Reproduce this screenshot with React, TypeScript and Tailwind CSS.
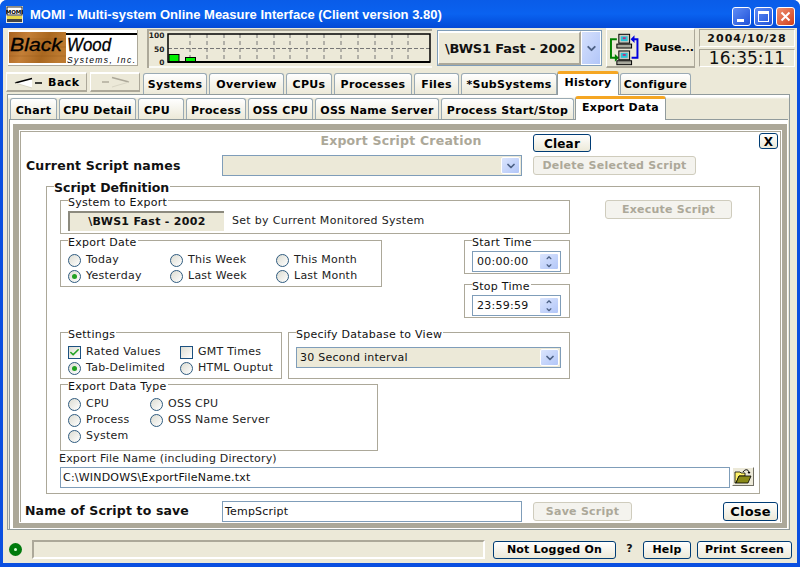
import { ReactNode } from 'react'
import { Check, ChevronDown, ChevronUp } from 'lucide-react'

const topTabs = [
  { label: 'Systems', cls: 'w-[64px]' },
  { label: 'Overview', cls: 'w-[75px]' },
  { label: 'CPUs', cls: 'w-[46px]' },
  { label: 'Processes', cls: 'w-[78px]' },
  { label: 'Files', cls: 'w-[45px]' },
  { label: '*SubSystems', cls: 'w-[96px]' },
  { label: 'History', cls: 'w-[62px] -ml-[2px]', active: true },
  { label: 'Configure', cls: 'w-[71px] -ml-[1px]' },
]

const subTabs = [
  { label: 'Chart', cls: 'w-[47px]' },
  { label: 'CPU Detail', cls: 'w-[77px]' },
  { label: 'CPU', cls: 'w-[46px] justify-start pl-[5px]' },
  { label: 'Process', cls: 'w-[60px]' },
  { label: 'OSS CPU', cls: 'w-[65px]' },
  { label: 'OSS Name Server', cls: 'w-[124px]' },
  { label: 'Process Start/Stop', cls: 'w-[133px]' },
  { label: 'Export Data', cls: 'w-[91px] -ml-[1px]', active: true },
]

function Tab({ label, cls, active, pad }: { label: string; cls: string; active?: boolean; pad: string }) {
  if (active) {
    return (
      <div className={`relative z-10 -mb-px flex h-[24px] items-center justify-center rounded-t-[3px] border-x border-[#919b9c] border-t-[3px] border-t-[#f5a623] bg-white pb-[2px] text-[11px] font-bold tracking-[0.3px] text-black ${cls}`}>
        {label}
      </div>
    )
  }
  return (
    <div className={`flex h-[21px] items-center justify-center rounded-t-[3px] border-x border-t border-[#9aaab4] bg-gradient-to-b from-white to-[#ece9d8] text-[11px] font-bold tracking-[0.3px] text-black ${pad} ${cls}`}>
      {label}
    </div>
  )
}

function Group({ title, cls, children }: { title: string; cls: string; children?: ReactNode }) {
  return (
    <div className={`relative border border-[#aca899] ${cls}`}>
      <span className="absolute -top-[4px] left-[7px] bg-white pr-px text-[11px] leading-[12px] tracking-[0.25px] text-[#111]">{title}</span>
      {children}
    </div>
  )
}

function Radio({ label, checked }: { label: string; checked?: boolean }) {
  return (
    <div className="flex h-[16px] items-center gap-[5px] text-[11px] tracking-[0.25px] text-[#222]">
      <span className="flex h-[13px] w-[13px] items-center justify-center rounded-full border border-[#2f5b7f] bg-gradient-to-br from-[#dcdcd2] to-white">
        {checked && <span className="h-[5px] w-[5px] rounded-full bg-[#21a121]" />}
      </span>
      {label}
    </div>
  )
}

function CheckItem({ label, checked }: { label: string; checked?: boolean }) {
  return (
    <div className="flex h-[16px] items-center gap-[5px] text-[11px] tracking-[0.25px] text-[#222]">
      <span className="flex h-[13px] w-[13px] items-center justify-center border border-[#1c5180] bg-gradient-to-br from-[#dcdcd2] to-white">
        {checked && <Check size={11} strokeWidth={3.5} className="text-[#21a121]" />}
      </span>
      {label}
    </div>
  )
}

function Btn({ label, cls }: { label: string; cls: string }) {
  return (
    <div className={`flex items-center justify-center rounded-[3px] border border-[#003c74] bg-gradient-to-b from-white to-[#ece9d8] pt-px text-[11px] font-bold tracking-[0.2px] text-black ${cls}`}>
      {label}
    </div>
  )
}

function OffBtn({ label, cls }: { label: string; cls: string }) {
  return (
    <div className={`flex items-center justify-center rounded-[3px] border border-[#cfccbd] bg-[#f4f3ee] pt-px text-[11px] font-bold tracking-[0.25px] text-[#aca899] ${cls}`}>
      {label}
    </div>
  )
}

function DropBtn() {
  return (
    <div className="flex h-[17px] w-[19px] items-center justify-center rounded-[2px] border border-white bg-gradient-to-br from-[#dbe5fd] to-[#b2c6f8]">
      <ChevronDown size={12} strokeWidth={3.5} className="text-[#4d6185]" />
    </div>
  )
}

function Logo() {
  return (
    <svg width="130" height="36" viewBox="0 0 130 36" className="block">
      <defs>
        <linearGradient id="wood" x1="0" y1="0" x2="1" y2="0.2">
          <stop offset="0" stopColor="#a8621f" />
          <stop offset="0.35" stopColor="#c47f37" />
          <stop offset="0.7" stopColor="#a9671f" />
          <stop offset="1" stopColor="#bd7a30" />
        </linearGradient>
      </defs>
      <rect width="130" height="36" fill="#aca899" />
      <rect x="0" y="0" width="129" height="35" fill="#fff" />
      <rect x="1" y="2" width="57" height="31" fill="url(#wood)" />
      <path d="M1 9h57M1 17h57M1 26h57" stroke="#8f5418" strokeWidth="0.6" opacity="0.5" />
      <rect x="58" y="3" width="71" height="2" fill="#000" />
      <text x="2" y="21" fontFamily="Liberation Sans" fontStyle="italic" fontSize="18" textLength="52" lengthAdjust="spacingAndGlyphs" stroke="#000" strokeWidth="0.3" fill="#000">Black</text>
      <text x="59" y="21" fontFamily="Liberation Sans" fontStyle="italic" fontSize="18" textLength="44" lengthAdjust="spacingAndGlyphs" stroke="#000" strokeWidth="0.3" fill="#000">Wood</text>
      <text x="59" y="33" fontFamily="Liberation Sans" fontStyle="italic" fontSize="8.5" textLength="68" fill="#000">Systems, Inc.</text>
    </svg>
  )
}

function Chart() {
  const xs = [190, 207, 224, 240, 257, 274, 290, 307, 324, 341, 358, 375, 392, 408]
  return (
    <svg width="285" height="39" viewBox="147 29 285 39" className="block">
      <rect x="147" y="29" width="285" height="39" fill="#ece9d8" />
      <path d="M148 68V30h284" fill="none" stroke="#aca899" strokeWidth="2" />
      <path d="M149 67h283" stroke="#fff" strokeWidth="1.5" />
      {xs.map((x) => (
        <line key={x} x1={x} y1="34" x2={x} y2="62" stroke="#777" strokeDasharray="4 3" />
      ))}
      <line x1="168" y1="48.5" x2="430" y2="48.5" stroke="#777" strokeDasharray="4 2" />
      <rect x="169" y="54.5" width="10" height="7" fill="#00f000" stroke="#000" />
      <rect x="185.5" y="57.5" width="10" height="4" fill="#00f000" stroke="#000" />
      <path d="M168 34h262v28H168z" fill="none" stroke="#000" strokeWidth="1.5" />
      <path d="M168 62h262" stroke="#000" strokeWidth="2" />
      <text x="164.5" y="38" textAnchor="end" fontSize="7.5" fontWeight="700" fontFamily="DejaVu Sans" fill="#222">100</text>
      <text x="164.5" y="51.5" textAnchor="end" fontSize="7.5" fontWeight="700" fontFamily="DejaVu Sans" fill="#222">50</text>
      <text x="164.5" y="65" textAnchor="end" fontSize="7.5" fontWeight="700" fontFamily="DejaVu Sans" fill="#222">0</text>
    </svg>
  )
}

function Computer({ y }: { y: number }) {
  return (
    <g transform={`translate(7 ${y})`}>
      <rect x="2" y="0" width="11" height="9" fill="#c9c9c0" stroke="#000" />
      <rect x="4" y="2" width="7" height="5" fill="#28c6d8" />
      <rect x="6" y="3" width="3" height="2" fill="#c03080" />
      <rect x="0" y="10" width="15" height="4" fill="#a8a89c" stroke="#000" />
    </g>
  )
}

function PauseIcon() {
  return (
    <svg width="30" height="34" viewBox="0 0 30 34">
      <path d="M7 7H1V26h5" fill="none" stroke="#008000" strokeWidth="2" />
      <path d="M5 22l4 4-4 4z" fill="#008000" />
      <path d="M22 26h6V7h-4" fill="none" stroke="#0000e0" strokeWidth="2" />
      <path d="M25 3l-4 4 4 4z" fill="#0000e0" />
      <Computer y={2} />
      <Computer y={19} />
    </svg>
  )
}

function FolderIcon() {
  return (
    <svg width="18" height="15" viewBox="0 0 18 15">
      <path d="M1 3h5l1 1h4v3H5L2 14H1z" fill="#fff26b" stroke="#000" strokeWidth="0.8" />
      <path d="M2 14l3-7h12l-3 7z" fill="#8a8a18" stroke="#000" strokeWidth="0.8" />
      <path d="M9 3c2-3 5-3 6 0" fill="none" stroke="#000" />
      <path d="M13.5 3h3l-1.5 2z" fill="#000" />
    </svg>
  )
}

function ArrowBack({ color, fill }: { color: string; fill: string }) {
  return (
    <svg width="30" height="12" viewBox="0 0 30 12">
      <path d="M1 6L18 11V1z" fill={fill} />
      <path d="M1 6L18 1.5" stroke={color} strokeWidth="1.6" fill="none" />
      <path d="M1 6L18 11" stroke="#d8d5c4" fill="none" />
      <path d="M21 6h7" stroke={color} strokeWidth="1.4" />
    </svg>
  )
}

export default function App() {
  return (
    <div className="flex h-[567px] w-[800px] flex-col overflow-hidden rounded-t-[7px] bg-[#0a4fe0] font-['DejaVu_Sans',sans-serif]">
      {/* title bar */}
      <div className="flex h-[28px] shrink-0 items-center bg-gradient-to-b from-[#0a5ce8] via-[#0a62f0] to-[#0449d6] pl-[6px] pr-[5px]">
        <svg width="17" height="17" viewBox="0 0 17 17">
          <rect width="17" height="17" fill="#ece9d8" />
          <rect x="1" y="1" width="15" height="8" fill="#fff" stroke="#000" strokeWidth="0.8" />
          <text x="8.5" y="7.5" textAnchor="middle" fontSize="5.5" fontWeight="700" fontFamily="DejaVu Sans" fill="#000">MOMI</text>
          <rect x="1" y="10" width="15" height="3" fill="#e8d84a" />
          <rect x="1" y="13" width="15" height="3" fill="#444" />
        </svg>
        <span className="ml-[7px] mt-px font-['Liberation_Sans',sans-serif] text-[13px] font-bold text-white">MOMI - Multi-system Online Measure Interface (Client version 3.80)</span>
        <div className="ml-auto mt-[4px] flex gap-[3px]">
          <div className="flex h-[19px] w-[19px] items-end rounded-[3px] border border-white bg-gradient-to-br from-[#5f8cf5] to-[#2050d8] pb-[3px] pl-[4px]">
            <span className="h-[3px] w-[7px] bg-white" />
          </div>
          <div className="flex h-[19px] w-[19px] items-center justify-center rounded-[3px] border border-white bg-gradient-to-br from-[#5f8cf5] to-[#2050d8]">
            <span className="h-[11px] w-[11px] border border-t-[3px] border-white" />
          </div>
          <div className="flex h-[19px] w-[19px] items-center justify-center rounded-[3px] border border-white bg-gradient-to-br from-[#ee9070] to-[#d03a14]">
            <svg width="11" height="11" viewBox="0 0 11 11">
              <path d="M1.5 1.5l8 8M9.5 1.5l-8 8" stroke="#fff" strokeWidth="2" />
            </svg>
          </div>
        </div>
      </div>

      <div className="mx-[3px] mb-[4px] flex flex-1 flex-col bg-[#ece9d8]">
        {/* toolbar */}
        <div className="flex h-[42px] shrink-0 items-start">
          <div className="ml-[5px] mt-[2px]">
            <Logo />
          </div>
          <div className="ml-[9px] mt-[1px]">
            <Chart />
          </div>
          <div className="ml-[5px] mt-[2px] flex h-[36px] w-[165px] items-stretch border border-[#7f9db9]">
            <div className="flex w-[143px] items-center border-y-2 border-l border-r-2 border-t-white border-l-white border-b-[#aca899] border-r-[#aca899] pl-[6px] pt-px text-[13px] font-bold tracking-[-0.15px] text-[#111]">
              \BWS1 Fast - 2002
            </div>
            <div className="flex w-[20px] items-center justify-center border border-white bg-gradient-to-br from-[#d5e0fc] to-[#b2c6f8]">
              <ChevronDown size={13} strokeWidth={3.5} className="text-[#4d6185]" />
            </div>
          </div>
          <div className="ml-[4px] flex h-[40px] w-[89px] items-center gap-[5px] border-y-2 border-x border-t-white border-l-white border-b-[#aca899] border-r-[#aca899] pl-[3px] pt-px text-[11px] font-bold text-black">
            <PauseIcon />
            Pause...
          </div>
          <div className="ml-[4px] mt-[1px] flex w-[96px] flex-col gap-[2px]">
            <div className="flex h-[18px] items-center justify-center border border-t-[#aca899] border-l-[#aca899] border-b-white border-r-white pt-[2px] text-[11px] font-bold tracking-[1px] text-[#111]">2004/10/28</div>
            <div className="flex h-[18px] items-center justify-center border border-t-[#aca899] border-l-[#aca899] border-b-white border-r-white pt-px text-[17px] text-[#111]">16:35:11</div>
          </div>
        </div>

        {/* navigation row */}
        <div className="flex h-[24px] shrink-0 items-end">
          <div className="ml-[3px] mb-[2px] flex h-[20px] w-[81px] items-center gap-[4px] self-end border-y-2 border-x border-t-white border-l-white border-b-[#aca899] border-r-[#aca899] pl-[7px] pt-[2px] text-[11px] font-bold tracking-[0.5px] text-black">
            <ArrowBack color="#000" fill="#fff" />
            Back
          </div>
          <div className="ml-[3px] mb-[2px] flex h-[20px] w-[50px] items-center justify-center border-y-2 border-x border-t-white border-l-white border-b-[#aca899] border-r-[#aca899]">
            <span className="-scale-x-100">
              <ArrowBack color="#aca899" fill="#ece9d8" />
            </span>
          </div>
          <div className="ml-[3px] flex items-end gap-[2px]">
            {topTabs.map((t) => (
              <Tab key={t.label} {...t} pad="pt-[2px]" />
            ))}
          </div>
        </div>

        {/* main tab pane */}
        <div className="ml-[4px] flex h-[436px] w-[783px] shrink-0 flex-col border border-[#919b9c] bg-[linear-gradient(#fff_2px,#ece9d8_4px)]">
          <div className="flex h-[24px] shrink-0 items-end gap-[2px] pl-[2px]">
            {subTabs.map((t) => (
              <Tab key={t.label} {...t} pad="pt-[4px]" />
            ))}
          </div>
          <div className="ml-px mr-px flex flex-1 flex-col border-l border-t border-[#919b9c] bg-white pb-px pl-[3px] pr-px pt-[4px]">
            <div className="flex flex-1 flex-col border-x-[6px] border-b-[5px] border-t-[6px] border-r-[5px] border-[#aca899]">
              <div className="flex flex-1 flex-col border border-white">
                <div className="flex flex-1 flex-col border border-b-0 border-[#aca899] bg-white pt-px">
                  {/* header rows */}
                  <div className="flex h-[22px] items-start">
                    <span className="ml-[280px] mt-[1px] w-[200px] whitespace-nowrap text-center text-[12.5px] font-bold leading-[14px] tracking-[0.2px] text-[#aca899]">Export Script Creation</span>
                    <Btn label="Clear" cls="ml-[32px] mt-px h-[18px] w-[58px] text-[12px]" />
                    <Btn label="X" cls="ml-auto mr-[2px] h-[16px] w-[19px] text-[12px]" />
                  </div>
                  <div className="flex h-[21px] items-start">
                    <span className="w-[201px] pl-[5px] text-[12.5px] font-bold leading-[21px] tracking-[0.2px] text-[#111]">Current Script names</span>
                    <div className="flex h-[21px] w-[300px] items-center justify-end border border-[#7f9db9] bg-[#ece9d8] pr-px">
                      <DropBtn />
                    </div>
                    <OffBtn label="Delete Selected Script" cls="ml-[11px] mt-px h-[19px] w-[163px]" />
                  </div>

                  {/* script definition */}
                  <div className="relative ml-[25px] mt-[10px] h-[308px] w-[714px] border border-[#aca899] pl-[13px] pt-[13px]">
                    <span className="absolute -top-[7px] left-[7px] bg-white pr-px text-[12.5px] font-bold leading-[16px] text-[#111]">Script Definition</span>

                    <div className="flex items-start">
                      <Group title="System to Export" cls="h-[34px] w-[510px] pl-[7px] pt-[10px]">
                        <div className="flex items-center">
                          <div className="flex h-[20px] w-[156px] items-center justify-center border-l-2 border-t-2 border-[#8c8a7e] bg-[#ece9d8] text-[11px] font-bold tracking-[0.3px] text-[#111]">\BWS1 Fast - 2002</div>
                          <span className="ml-[8px] pt-px text-[11px] tracking-[0.3px] text-[#222]">Set by Current Monitored System</span>
                        </div>
                      </Group>
                      <OffBtn label="Execute Script" cls="ml-[35px] h-[19px] w-[127px]" />
                    </div>

                    <div className="mt-[6px] flex items-start">
                      <Group title="Export Date" cls="h-[47px] w-[322px] pl-[7px] pt-[11px]">
                        <div className="grid grid-cols-[102px_106px_1fr]">
                          <Radio label="Today" />
                          <Radio label="This Week" />
                          <Radio label="This Month" />
                          <Radio label="Yesterday" checked />
                          <Radio label="Last Week" />
                          <Radio label="Last Month" />
                        </div>
                      </Group>
                      <div className="ml-[82px] flex w-[106px] flex-col gap-[10px]">
                        {[
                          { title: 'Start Time', value: '00:00:00' },
                          { title: 'Stop Time', value: '23:59:59' },
                        ].map((t) => (
                          <Group key={t.title} title={t.title} cls="h-[34px] pl-[7px] pt-[10px]">
                            <div className="flex h-[21px] w-[89px] items-center justify-between border border-[#7f9db9] pl-[4px] pr-px text-[11px] tracking-[0.25px] text-[#111]">
                              <span className="pt-px">{t.value}</span>
                              <div className="flex h-[17px] w-[20px] flex-col items-center justify-center rounded-[2px] border border-white bg-gradient-to-br from-[#dbe5fd] to-[#b2c6f8]">
                                <ChevronUp size={8} strokeWidth={4} className="text-[#4d6185]" />
                                <ChevronDown size={8} strokeWidth={4} className="text-[#4d6185]" />
                              </div>
                            </div>
                          </Group>
                        ))}
                      </div>
                    </div>

                    <div className="mt-[14px] flex items-start">
                      <Group title="Settings" cls="h-[47px] w-[222px] pl-[7px] pt-[11px]">
                        <div className="grid grid-cols-[112px_1fr]">
                          <CheckItem label="Rated Values" checked />
                          <CheckItem label="GMT Times" />
                          <Radio label="Tab-Delimited" checked />
                          <Radio label="HTML Ouptut" />
                        </div>
                      </Group>
                      <Group title="Specify Database to View" cls="ml-[6px] h-[47px] w-[282px] pl-[7px] pt-[14px]">
                        <div className="flex h-[21px] w-[265px] items-center justify-between border border-[#7f9db9] bg-[#ece9d8] pl-[3px] pr-px text-[11px] tracking-[0.25px] text-[#111]">
                          <span className="pt-[2px]">30 Second interval</span>
                          <DropBtn />
                        </div>
                      </Group>
                    </div>

                    <Group title="Export Data Type" cls="mt-[5px] h-[67px] w-[318px] pl-[7px] pt-[11px]">
                      <div className="grid grid-cols-[82px_1fr]">
                        <Radio label="CPU" />
                        <Radio label="OSS CPU" />
                        <Radio label="Process" />
                        <Radio label="OSS Name Server" />
                        <Radio label="System" />
                      </div>
                    </Group>

                    <div className="-ml-px mt-px text-[11px] leading-[14px] tracking-[0.2px] text-[#222]">Export File Name (including Directory)</div>
                    <div className="mt-px flex items-start">
                      <div className="flex h-[21px] w-[670px] items-center border border-[#7f9db9] pl-[2px] pt-px text-[11px] tracking-[0.2px] text-[#111]">C:\WINDOWS\ExportFileName.txt</div>
                      <div className="ml-[2px] flex h-[19px] w-[22px] items-center justify-center border border-t-white border-l-white border-b-[#716f64] border-r-[#716f64] bg-[#ece9d8]">
                        <FolderIcon />
                      </div>
                    </div>
                  </div>

                  {/* save row */}
                  <div className="mt-[7px] flex h-[21px] items-start">
                    <span className="w-[201px] pl-[4px] text-[12.5px] font-bold leading-[20px] tracking-[0.15px] text-[#111]">Name of Script to save</span>
                    <div className="flex h-[21px] w-[300px] items-center border border-[#7f9db9] pl-[2px] pt-px text-[11px] tracking-[0.2px] text-[#111]">TempScript</div>
                    <OffBtn label="Save Script" cls="ml-[11px] mt-px h-[19px] w-[99px]" />
                    <Btn label="Close" cls="ml-auto mr-[2px] mt-px h-[19px] w-[55px] text-[13px]" />
                  </div>
                </div>
              </div>
            </div>
          </div>
        </div>

        {/* status bar */}
        <div className="flex flex-1 items-center pt-[6px]">
          <span className="ml-[6px] flex h-[13px] w-[13px] items-center justify-center rounded-full bg-[#007a0c]">
            <span className="h-[3px] w-[3px] rounded-full bg-[#d8ffd8]" />
          </span>
          <div className="ml-[10px] h-[19px] w-[453px] border-2 border-t-[#aca899] border-l-[#aca899] border-b-white border-r-white" />
          <Btn label="Not Logged On" cls="ml-[8px] h-[18px] w-[123px]" />
          <span className="ml-[10px] w-[7px] text-center text-[11px] font-bold text-[#111]">?</span>
          <Btn label="Help" cls="ml-[10px] h-[18px] w-[48px]" />
          <Btn label="Print Screen" cls="ml-[6px] h-[18px] w-[95px]" />
        </div>
      </div>
    </div>
  )
}
